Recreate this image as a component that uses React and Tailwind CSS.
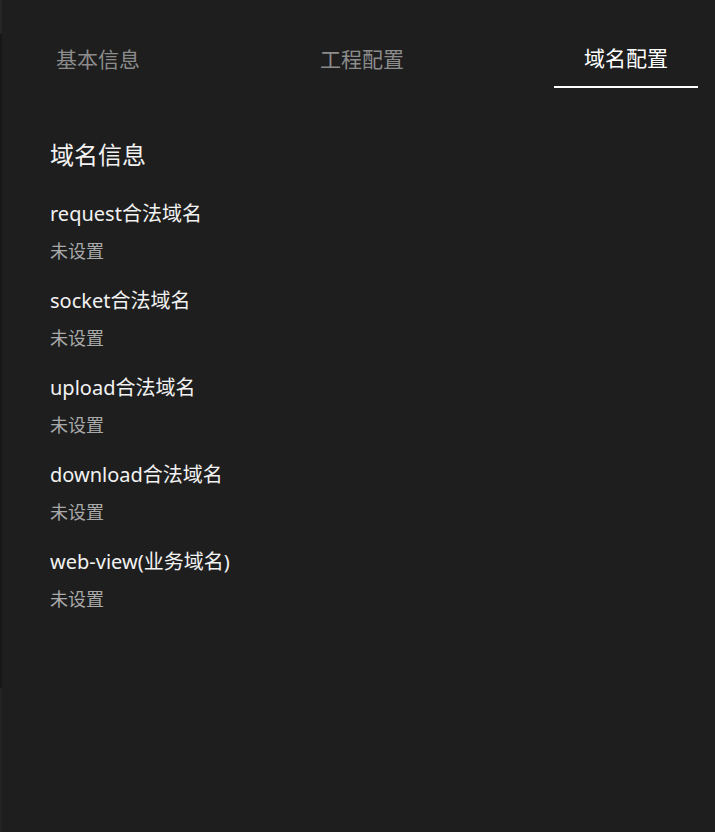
import React from "react";

const items = [
  "request合法域名",
  "socket合法域名",
  "upload合法域名",
  "download合法域名",
  "web-view(业务域名)",
];

export default function App() {
  return (
    <div
      className="flex h-[832px] w-[715px] bg-[#1e1e1e]"
      style={{ fontFamily: '"Noto Sans", "Noto Sans CJK SC", sans-serif' }}
    >
      <div className="flex w-[2px] flex-col">
        <div className="h-[34px] bg-[#262626]" />
        <div className="h-[654px] bg-[#171717]" />
        <div className="flex-1 bg-[#232323]" />
      </div>
      <div className="flex flex-1 flex-col">
        <div className="flex justify-between pl-[24px] pr-[17px] pt-[31px]">
          <div className="flex h-[57px] w-[144px] items-center justify-center text-[21px] text-[#8c8c8c]">
            基本信息
          </div>
          <div className="flex h-[57px] w-[144px] items-center justify-center text-[21px] text-[#8c8c8c]">
            工程配置
          </div>
          <div className="flex h-[57px] w-[144px] items-center justify-center border-b-2 border-white text-[21px] text-white">
            域名配置
          </div>
        </div>
        <div className="flex flex-col pl-[48px] pt-[51px]">
          <div className="text-[24px] leading-[32px] text-[#f2f2f2]">域名信息</div>
          <div className="mt-[29px] flex flex-col gap-[24px]">
            {items.map((t) => (
              <div key={t} className="flex flex-col gap-[11px]">
                <div className="text-[20px] leading-[28px] text-[#f2f2f2]">{t}</div>
                <div className="text-[18px] leading-[24px] text-[#a9a9a9]">未设置</div>
              </div>
            ))}
          </div>
        </div>
      </div>
    </div>
  );
}
